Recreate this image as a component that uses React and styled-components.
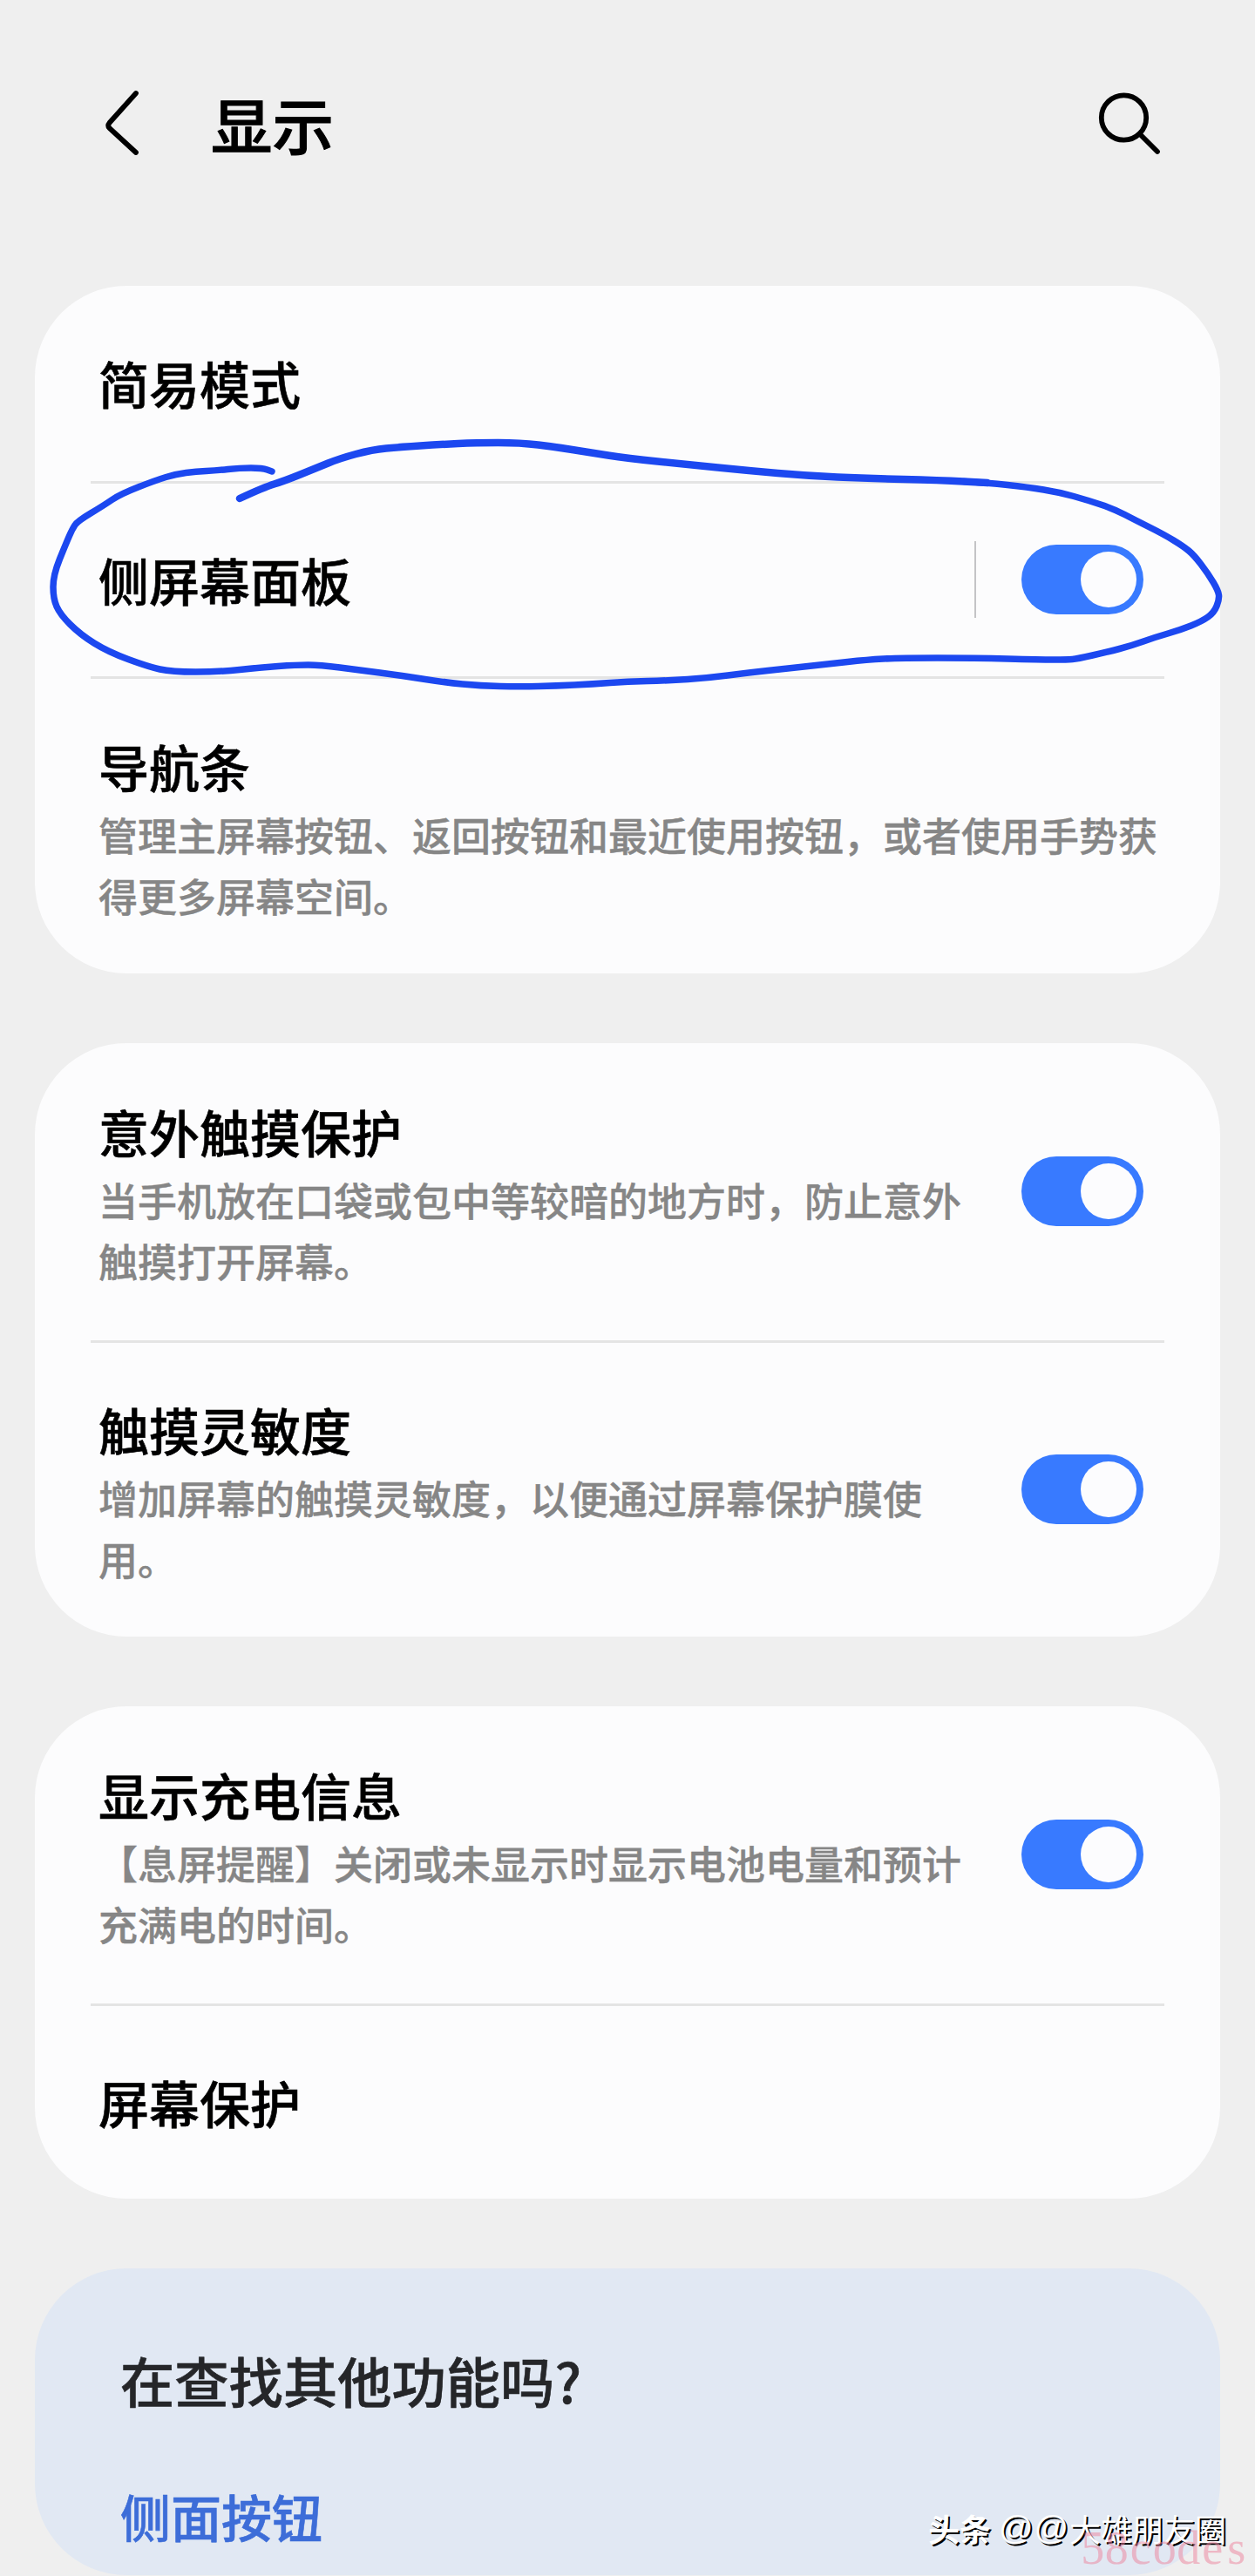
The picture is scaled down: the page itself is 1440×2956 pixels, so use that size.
import React, { useState } from "react";
import styled, { createGlobalStyle } from "styled-components";

const GROUPS = [
    [
        { title: "简易模式", height: 224 },
        { title: "侧屏幕面板", height: 221, toggle: true, split: true },
        {
            title: "导航条",
            desc: "管理主屏幕按钮、返回按钮和最近使用按钮，或者使用手势获得更多屏幕空间。",
            height: 338,
        },
    ],
    [
        {
            title: "意外触摸保护",
            desc: "当手机放在口袋或包中等较暗的地方时，防止意外触摸打开屏幕。",
            height: 341,
            toggle: true,
        },
        {
            title: "触摸灵敏度",
            desc: "增加屏幕的触摸灵敏度，以便通过屏幕保护膜使用。",
            height: 337,
            toggle: true,
        },
    ],
    [
        {
            title: "显示充电信息",
            desc: "【息屏提醒】关闭或未显示时显示电池电量和预计充满电的时间。",
            height: 341,
            toggle: true,
        },
        { title: "屏幕保护", height: 221 },
    ],
];

const STROKE_TOP = [
    [275, 572], [303, 559], [326, 552], [363, 537], [390, 526], [427, 516],
    [459, 513], [505, 510], [546, 508], [597, 508], [638, 513], [675, 519],
    [720, 526], [789, 533], [858, 540], [927, 546], [995, 549], [1078, 551],
    [1133, 554],
];

const STROKE_REST = [
    [1106, 552.5], [1133, 554], [1179, 559], [1216, 565], [1248, 574],
    [1278, 584], [1303, 597], [1335, 613], [1358, 627], [1370, 637],
    [1386, 658], [1398, 678], [1399, 688], [1393, 703], [1379, 713],
    [1354, 723], [1326, 731], [1298, 741], [1271, 748], [1236, 756],
    [1225, 757], [1193, 757], [1119, 755], [1032, 755], [995, 757],
    [950, 762], [904, 767], [858, 772], [812, 778], [766, 781], [720, 782],
    [680, 785], [638, 787], [597, 788], [551, 787], [510, 783], [459, 775],
    [413, 769], [367, 763], [340, 763], [298, 766], [252, 771], [197, 771],
    [170, 765], [124, 748], [92, 728], [69, 705], [61, 687], [61, 660],
    [76, 623], [83, 607], [89, 598], [119, 580], [138, 567], [179, 551],
    [202, 544], [225, 541], [248, 540], [275, 537], [301, 537], [312, 541],
];

// smooth the pen points with quadratic curves through the midpoints
function toPath(points) {
    let d = `M${points[0].join(" ")}`;
    for (let i = 1; i < points.length - 1; i++) {
        const [x, y] = points[i];
        const [nx, ny] = points[i + 1];
        d += ` Q${x} ${y} ${(x + nx) / 2} ${(y + ny) / 2}`;
    }
    return `${d} L${points[points.length - 1].join(" ")}`;
}

function Toggle() {
    const [on, setOn] = useState(true);

    return (
        <StyledToggle $on={on} onClick={() => setOn(!on)}>
            <StyledKnob />
        </StyledToggle>
    );
}

function Row({ item }) {
    return (
        <StyledRow $height={item.height}>
            <StyledBody $tall={Boolean(item.desc)}>
                <StyledTitle>{item.title}</StyledTitle>
                {item.desc && <StyledDesc>{item.desc}</StyledDesc>}
            </StyledBody>
            {item.split && <StyledSplit />}
            {item.toggle && <Toggle />}
        </StyledRow>
    );
}

function App() {
    return (
        <StyledPage>
            <GlobalStyle />
            <StyledHeader>
                <StyledBack viewBox="0 0 44 80">
                    <path d="M38 6 L7.5 40 Q5 43 7.5 46 L38 74" />
                </StyledBack>
                <StyledHeading>显示</StyledHeading>
                <StyledSearch viewBox="0 0 76 76">
                    <circle cx="31.5" cy="32" r="25.7" />
                    <path d="M50 51 L70 71" />
                </StyledSearch>
            </StyledHeader>

            <StyledGroups>
                {GROUPS.map((group, i) => (
                    <StyledCard key={i}>
                        {group.map((item, j) => (
                            <React.Fragment key={item.title}>
                                {j > 0 && <StyledLine />}
                                <Row item={item} />
                            </React.Fragment>
                        ))}
                        {i === 0 && (
                            <StyledScribble viewBox="40 488 1370 320">
                                <path d={toPath(STROKE_TOP)} strokeWidth="8.5" />
                                <path d={toPath(STROKE_REST)} strokeWidth="7.5" />
                            </StyledScribble>
                        )}
                    </StyledCard>
                ))}
                <StyledMore>
                    <StyledQuestion>在查找其他功能吗?</StyledQuestion>
                    <StyledLink>侧面按钮</StyledLink>
                </StyledMore>
            </StyledGroups>

            <StyledCredit>
                <b>头条</b>
                <i>@@</i>
                <span>大雄朋友圈</span>
            </StyledCredit>
            <StyledCodes>
                {"58codes".split("").map((char, i) => (
                    <span key={i}>{char}</span>
                ))}
            </StyledCodes>
        </StyledPage>
    );
}

export default App;

const GlobalStyle = createGlobalStyle`
    * {
        box-sizing: border-box;
    }

    body {
        margin: 0;
        background: #efefef;
        font-family: "Noto Sans CJK SC", sans-serif;
        text-spacing-trim: space-all;
    }
`;

const StyledPage = styled.div`
    position: relative;
    width: 1440px;
    height: 2956px;
    overflow: hidden;
    background: #efefef;
`;

const StyledHeader = styled.header`
    display: flex;
    align-items: flex-start;
    height: 328px;
    padding: 101px 106px 0 118px;
`;

const StyledBack = styled.svg`
    width: 44px;
    height: 80px;
    fill: none;
    stroke: #000;
    stroke-width: 5.8;
    stroke-linecap: round;
`;

const StyledHeading = styled.h1`
    flex: 1;
    margin: -12px 0 0 80px;
    font-size: 70.5px;
    font-weight: 500;
    line-height: 104px;
    color: #000;
    -webkit-text-stroke: 1px #000;
`;

const StyledSearch = styled.svg`
    width: 76px;
    height: 76px;
    margin-top: 2px;
    fill: none;
    stroke: #000;
    stroke-width: 5.8;
    stroke-linecap: round;
`;

const StyledGroups = styled.main`
    display: flex;
    flex-direction: column;
    gap: 80px;
    padding: 0 40px;
`;

const StyledCard = styled.section`
    position: relative;
    border-radius: 105px;
    background: #fcfcfd;
`;

const StyledRow = styled.div`
    display: flex;
    align-items: center;
    height: ${({ $height }) => $height}px;
    padding: 0 88px 2px 73px;
`;

const StyledBody = styled.div`
    flex: 1;
    margin-right: -30px;
    padding-top: ${({ $tall }) => ($tall ? 5 : 0)}px;

    &:not(:last-child) {
        margin-right: 60px;
    }
`;

const StyledTitle = styled.div`
    font-size: 58px;
    font-weight: 500;
    line-height: 84px;
    color: #000;
    -webkit-text-stroke: 0.6px #000;
`;

const StyledDesc = styled.div`
    padding-top: 2px;
    font-size: 45px;
    font-weight: 500;
    line-height: 70px;
    color: #868686;
    -webkit-text-stroke: 0.4px #868686;
`;

const StyledLine = styled.div`
    height: 3px;
    margin: 0 64px;
    background: #e4e4e4;
`;

const StyledSplit = styled.div`
    width: 2px;
    height: 88px;
    margin-right: 52px;
    background: #c4c4c6;
`;

const StyledToggle = styled.button`
    display: flex;
    align-items: center;
    justify-content: ${({ $on }) => ($on ? "flex-end" : "flex-start")};
    width: 140px;
    height: 80px;
    padding: 0 8px;
    border: none;
    border-radius: 40px;
    background: ${({ $on }) => ($on ? "#387aff" : "#9a9a9c")};
`;

const StyledKnob = styled.span`
    width: 64px;
    height: 64px;
    border-radius: 50%;
    background: #fcfcfe;
`;

const StyledScribble = styled.svg`
    position: absolute;
    left: 0;
    top: 160px;
    width: 1370px;
    height: 320px;
    pointer-events: none;
    fill: none;
    stroke: #1c48f0;
    stroke-linecap: round;
    stroke-linejoin: round;
`;

const StyledMore = styled.section`
    height: 352px;
    padding: 82px 98px 0;
    border-radius: 105px;
    background: #e1e8f3;
`;

const StyledQuestion = styled.div`
    font-size: 62.3px;
    font-weight: 500;
    line-height: 92px;
    color: #252629;
    -webkit-text-stroke: 0.6px #252629;
`;

const StyledLink = styled.div`
    margin-top: 68px;
    font-size: 58px;
    font-weight: 500;
    line-height: 84px;
    color: #3d6dd8;
    -webkit-text-stroke: 0.6px #3d6dd8;
`;

const StyledCredit = styled.div`
    position: absolute;
    left: 1065px;
    top: 2875px;
    display: flex;
    font-size: 36px;
    line-height: 52px;
    color: #fff;
    text-shadow: 2px 2px 0 #000;

    b {
        font-weight: 700;
    }

    i {
        width: 90px;
        padding-left: 9px;
        font-family: "Liberation Sans", sans-serif;
        font-size: 39px;
        font-style: normal;
        letter-spacing: 1px;
    }
`;

const StyledCodes = styled.div`
    position: absolute;
    left: 1240px;
    top: 2897px;
    display: flex;
    font-family: "Liberation Serif", serif;
    font-size: 54px;
    line-height: 54px;
    color: rgba(238, 130, 155, 0.5);

    span {
        width: 27.5px;
        text-align: center;
    }
`;
